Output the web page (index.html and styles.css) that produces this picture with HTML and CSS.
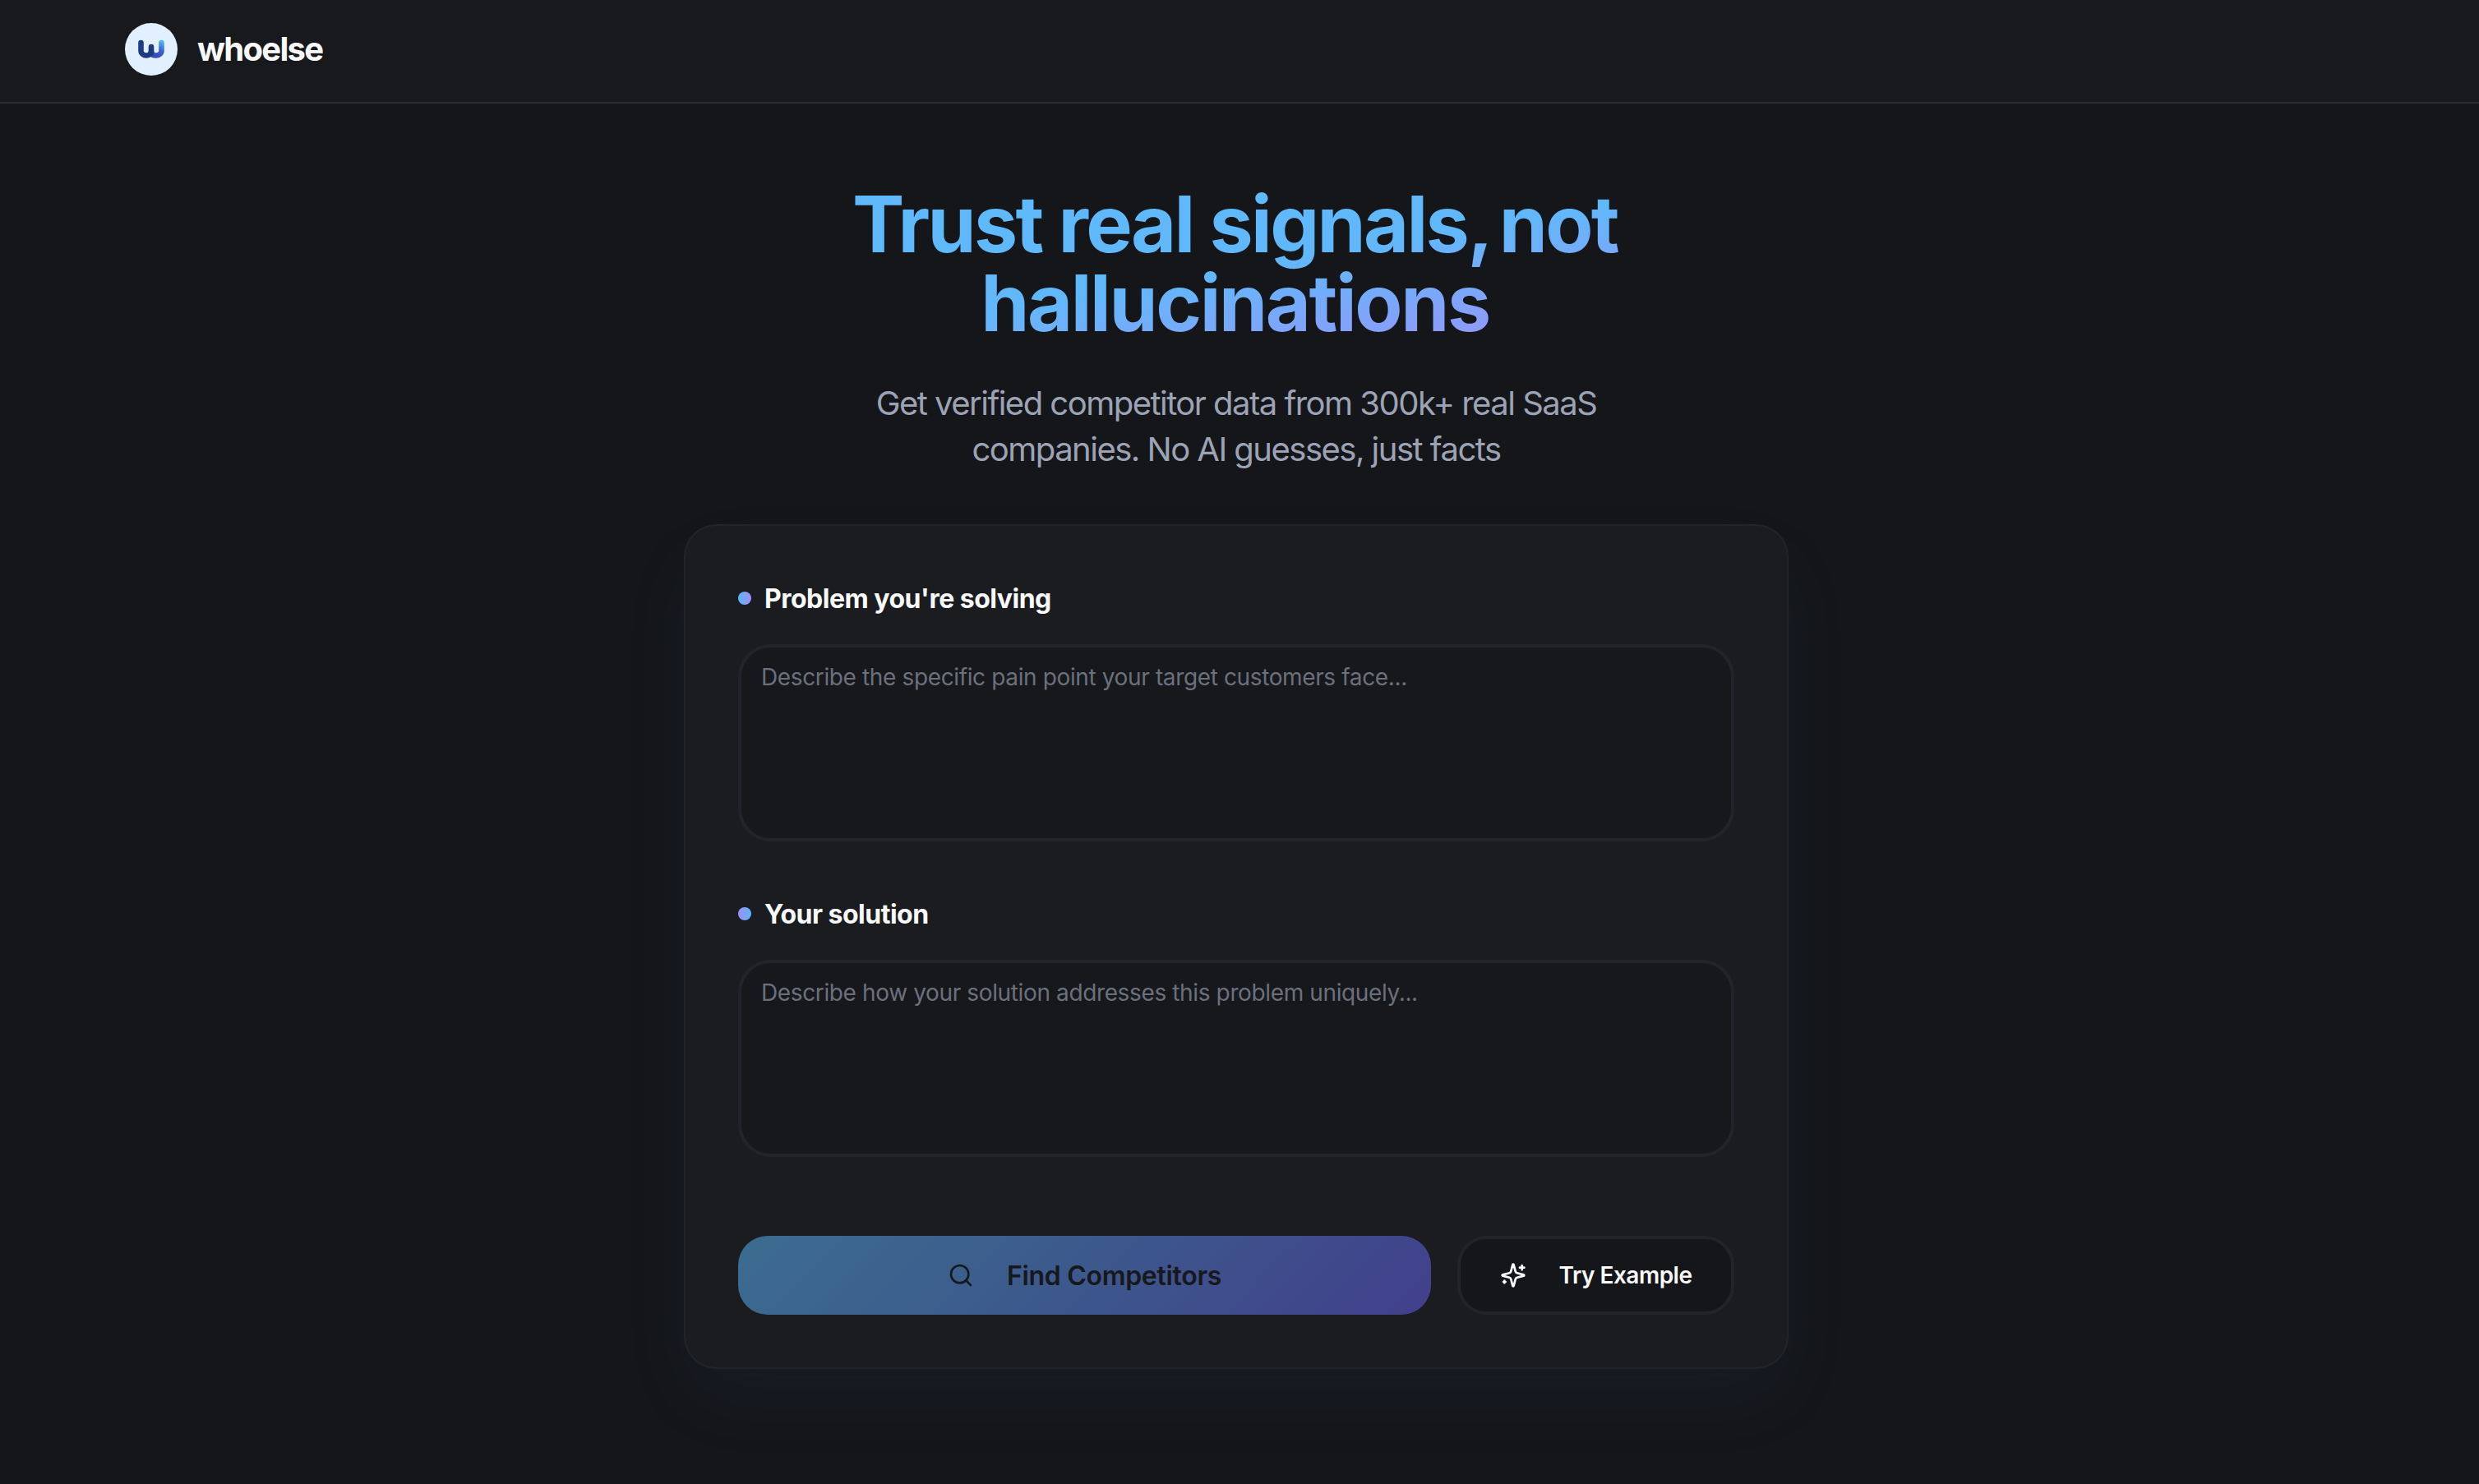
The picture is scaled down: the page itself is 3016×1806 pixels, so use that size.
FILE: index.html
```html
<!DOCTYPE html>
<html lang="en">
<head>
  <meta charset="UTF-8" />
  <meta name="viewport" content="width=device-width, initial-scale=1.0" />
  <title>whoelse</title>
  <link rel="stylesheet" href="styles.css">
</head>
<body>

  <!-- Header -->
  <header class="site-header">
    <a class="brand">
      <span class="brand-logo">
        <svg viewBox="0 0 32 24" fill="none" stroke-linecap="round" stroke-linejoin="round">
          <defs>
            <linearGradient id="logo-dark" x1="0" y1="0" x2="1" y2="1">
              <stop offset="0" stop-color="#1e3a8a" />
              <stop offset="1" stop-color="#1e3a7a" />
            </linearGradient>
            <linearGradient id="logo-light" gradientUnits="userSpaceOnUse" x1="28" y1="2" x2="20" y2="22">
              <stop offset="0" stop-color="#4cb5f0" />
              <stop offset="0.5" stop-color="#3f5fd0" />
              <stop offset="1" stop-color="#2f49b0" />
            </linearGradient>
          </defs>
          <path d="M16 14.5c0 3.5 2 5 5.5 5s7-2 7-6V4" stroke="url(#logo-light)" stroke-width="6.6" />
          <path d="M3.5 4v9.5c0 4 3.5 6 6.500 6s6-2 6-5V9" stroke="url(#logo-dark)" stroke-width="6.6" />
        </svg>
      </span>
      <span class="brand-name">whoelse</span>
    </a>
  </header>

  <main class="main">
    <!-- Hero -->
    <section class="hero">
      <h1><span class="tight">Trust real signals<span class="comma">,</span> not</span><br>hallucinations</h1>
      <p>Get verified competitor data from 300k+ real SaaS<br>companies. No AI guesses, just facts</p>
    </section>

    <!-- Search form -->
    <form class="card">
      <div class="field">
        <label class="field-label" for="problem"><span class="dot"></span>Problem you're solving</label>
        <textarea id="problem" placeholder="Describe the specific pain point your target customers face..."></textarea>
      </div>
      <div class="field">
        <label class="field-label" for="solution"><span class="dot dot-reverse"></span>Your solution</label>
        <textarea id="solution" placeholder="Describe how your solution addresses this problem uniquely..."></textarea>
      </div>
      <div class="actions">
        <button type="button" class="btn btn-primary">
          <svg class="icon" viewBox="0 0 24 24"><circle cx="11" cy="11" r="8" /><path d="m21 21-4.3-4.3" /></svg>
          <span>Find Competitors</span>
        </button>
        <button type="button" class="btn btn-secondary">
          <svg class="icon" viewBox="0 0 24 24">
            <path d="M9.937 15.5A2 2 0 0 0 8.5 14.063l-6.135-1.582a.5.5 0 0 1 0-.962L8.5 9.936A2 2 0 0 0 9.937 8.5l1.582-6.135a.5.5 0 0 1 .963 0L14.063 8.5A2 2 0 0 0 15.5 9.937l6.135 1.581a.5.5 0 0 1 0 .964L15.5 14.063a2 2 0 0 0-1.437 1.437l-1.582 6.135a.5.5 0 0 1-.963 0z" />
            <path d="M20 3v4M22 5h-4M4 17v2M5 18H3" />
          </svg>
          <span>Try Example</span>
        </button>
      </div>
    </form>
  </main>

</body>
</html>
```
FILE: styles.css
```css
* {
  box-sizing: border-box;
}

body {
  margin: 0;
  min-height: 100vh;
  overflow: hidden;
  font-family: Inter, "Liberation Sans", sans-serif;
  color: #fafafc;
  background-color: #15161a;
}

/* Header */
.site-header {
  height: 126px;
  padding: 28px 152px 0;
  background-color: #18191d;
  border-bottom: 2px solid #292d34;
}

.brand {
  display: inline-flex;
  align-items: center;
  gap: 24px;
}

.brand-logo {
  display: flex;
  align-items: center;
  justify-content: center;
  width: 64px;
  height: 64px;
  border-radius: 50%;
  background-color: #e1effe;
}

.brand-logo svg {
  width: 32px;
  height: 24px;
}

.brand-name {
  font-size: 40px;
  font-weight: 650;
  line-height: 56px;
  letter-spacing: -1.7px;
}

/* Main */
.main {
  display: flex;
  flex-direction: column;
  align-items: center;
  padding: 99px 8px 0 0;
}

.hero {
  text-align: center;
}

.hero h1 {
  width: 1152px;
  margin: 0 auto;
  padding: 0 3px 8px 0;
  font-size: 95px;
  font-weight: 700;
  line-height: 96px;
  letter-spacing: -2.4px;
  color: transparent;
  background: linear-gradient(to bottom right, #5fb9fb 0%, #60b8fb 50%, #a78bfa 100%);
  -webkit-background-clip: text;
  background-clip: text;
}

.hero .tight {
  letter-spacing: -2.65px;
}

.hero .comma {
  letter-spacing: -13px;
}

.hero p {
  margin: 38px 0 0;
  font-size: 40px;
  line-height: 56px;
  letter-spacing: -1.52px;
  color: #9ca3b5;
}

/* Form card */
.card {
  width: 1344px;
  height: 1028px;
  margin-top: 63px;
  padding: 64px;
  border: 2px solid #23242a;
  border-radius: 40px;
  background-color: #1b1c20;
  box-shadow: 0 40px 90px rgba(50, 140, 220, 0.05);
}

.field {
  margin-bottom: 64px;
}

.field-label {
  display: flex;
  align-items: center;
  gap: 16px;
  height: 48px;
  font-size: 32px;
  font-weight: 650;
  letter-spacing: -0.5px;
}

.dot {
  width: 16px;
  height: 16px;
  border-radius: 50%;
  background: linear-gradient(90deg, #56b8fa, #a78bfa);
}

.dot-reverse {
  background: linear-gradient(90deg, #a78bfa, #56b8fa);
}

.field textarea {
  display: block;
  width: 100%;
  height: 240px;
  margin-top: 32px;
  padding: 16px 24px;
  border: 4px solid #23242b;
  border-radius: 40px;
  resize: none;
  font-family: inherit;
  font-size: 28px;
  line-height: 40px;
  letter-spacing: -0.37px;
  color: #fafafc;
  background-color: #17181c;
}

.field textarea::placeholder {
  color: #6a707c;
}

.actions {
  display: flex;
  gap: 32px;
  margin-top: 96px;
}

.btn {
  display: flex;
  align-items: center;
  justify-content: center;
  gap: 40px;
  height: 96px;
  border-radius: 36px;
  font-family: inherit;
  white-space: nowrap;
}

.icon {
  width: 32px;
  height: 32px;
  flex-shrink: 0;
  fill: none;
  stroke: currentColor;
  stroke-width: 2;
  stroke-linecap: round;
  stroke-linejoin: round;
}

.btn-primary {
  flex: 1;
  border: none;
  font-size: 32px;
  font-weight: 600;
  letter-spacing: -0.3px;
  color: #17181c;
  background: linear-gradient(135deg, #3c6c90 0%, #3c588c 50%, #423f8c 100%);
}

.btn-secondary {
  width: 337px;
  border: 4px solid #23242b;
  font-size: 28px;
  font-weight: 560;
  letter-spacing: -0.5px;
  color: #fafafc;
  background-color: #15161a;
}
```
